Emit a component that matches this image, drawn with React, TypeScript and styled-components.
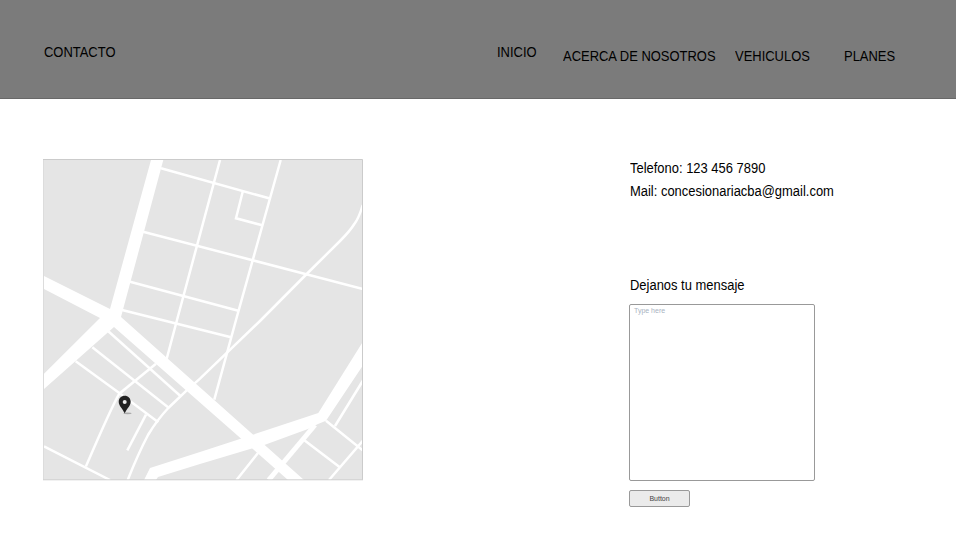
import React from "react";
import styled, { createGlobalStyle } from "styled-components";

const GlobalStyle = createGlobalStyle`
  * { box-sizing: border-box; }
  body {
    margin: 0;
    background: #fff;
    color: #000;
    font: 14px/16px "Liberation Sans", Arial, sans-serif;
    overflow: hidden;
  }
`;

const Page = styled.div`
  width: 956px;
  height: 533px;
`;

const Header = styled.header`
  display: flex;
  align-items: flex-start;
  height: 99px;
  padding: 44px 60px 0 44px;
  background: #7b7b7b;
  border-bottom: 1px solid #686868;
`;

const Condensed = styled.span`
  display: inline-block;
  transform: scaleX(0.925);
  transform-origin: left;
  white-space: nowrap;
`;

const Title = styled.h1`
  margin: 0;
  font: inherit;
`;

const Nav = styled.nav`
  display: flex;
  margin-left: auto;
`;

const NavItem = styled.a<{ $width: number; $drop?: number }>`
  width: ${(p) => p.$width}px;
  padding-top: ${(p) => p.$drop ?? 0}px;
  color: inherit;
`;

const Main = styled.main`
  display: flex;
  justify-content: space-between;
  padding: 60px 121px 0 43px;
`;

const Map = styled.svg`
  display: block;
  width: 320px;
  height: 322px;
`;

const Aside = styled.section`
  display: flex;
  flex-direction: column;
  align-items: flex-start;
  width: 206px;
  padding-top: 1px;
`;

const Line = styled.p<{ $gap: number }>`
  height: 16px;
  margin: 0 0 ${(p) => p.$gap}px 1px;
`;

const Message = styled.textarea`
  display: block;
  width: 186px;
  height: 177px;
  margin: 0 0 9px;
  padding: 1px 4px;
  border: 1px solid #999;
  border-radius: 2px;
  resize: none;
  font: 7px/9px "Liberation Sans", Arial, sans-serif;
  &::placeholder { color: #a9b3c1; opacity: 1; }
`;

const Send = styled.button`
  width: 61px;
  height: 17px;
  padding: 0 0 1px;
  border: 1px solid #999;
  border-radius: 2px;
  background: #ebebeb;
  color: #444;
  font: 7px/9px "Liberation Sans", Arial, sans-serif;
`;

function StreetMap() {
  return (
    <Map viewBox="43 159 320 322" aria-label="Mapa">
      <rect x="43.5" y="159.5" width="319" height="320.5" fill="#e5e5e5" />
      <g fill="#fff">
        <path d="M151 160H163.3L121 317L304 480H288L114 327L44 389V373.7L100 318L44 289V276L110 309Z" />
        <path d="M144 480L150 468L200 452L240.7 438.7L318.3 413L362.7 342V365.7L326 420.7L318 424L308 429L265 444.7L200 464L158 477L156 480Z" />
      </g>
      <g fill="none" stroke="#fff" strokeWidth="2.5">
        <path d="M161 168.3L269 198.3M143 231.7L363 289M130 281.7L238.3 310.7M122 310L231 337.3" />
        <path d="M220 160L177 320L166.7 358.7M280.7 160L236 320L214.3 399.7M242.7 191.7L236 218.3L262.3 225.3" />
        <path d="M362.7 205Q359 218 354.3 224Q350 231 340 241L306.7 274L261 320L200 378.7L186.7 390.3L168.3 408Q157 420 148 435Q138 454 127.7 480" />
        <path d="M108.3 331.3L180.7 396.3M92.3 347.3L169 408M75.7 361.3L119.3 393L158.3 422.3" />
        <path d="M156 363.7L119.3 393.7Q112 406 86 466.3M146 414.7L127.3 450.3M44 446.3L110 480" />
        <path d="M326 420.7L363 450.5M335 426L363 380.5M363 440.5L329 480M304 440L339.5 467M258 453L236.5 480" />
        <path d="M315 425L268.7 480" strokeWidth="5" />
      </g>
      <path d="M43.5 160V480" stroke="#dcdcdc" />
      <path d="M43 159.5H362.5V480" fill="none" stroke="#cbcbcb" />
      <path d="M43 479.8H363" stroke="#d0d0d0" />
      <ellipse cx="127.5" cy="413.3" rx="4" ry="0.9" fill="#aaa" />
      <path d="M124.7 395.7C121.3 395.7 118.7 398.3 118.7 401.7C118.7 405.7 122.5 408.5 124.7 413.3C126.9 408.5 130.7 405.7 130.7 401.7C130.7 398.3 128.1 395.7 124.7 395.7Z" fill="#222" />
      <circle cx="124.7" cy="402" r="2" fill="#eee" />
    </Map>
  );
}

export default function App() {
  return (
    <Page>
      <GlobalStyle />
      <Header>
        <Title><Condensed>CONTACTO</Condensed></Title>
        <Nav>
          <NavItem $width={66}><Condensed>INICIO</Condensed></NavItem>
          <NavItem $width={172} $drop={4}><Condensed>ACERCA DE NOSOTROS</Condensed></NavItem>
          <NavItem $width={109} $drop={4}><Condensed>VEHICULOS</Condensed></NavItem>
          <NavItem $width={52} $drop={4}><Condensed>PLANES</Condensed></NavItem>
        </Nav>
      </Header>
      <Main>
        <StreetMap />
        <Aside>
          <Line $gap={7}><Condensed>Telefono: 123 456 7890</Condensed></Line>
          <Line $gap={78}><Condensed>Mail: concesionariacba@gmail.com</Condensed></Line>
          <Line $gap={11}><Condensed>Dejanos tu mensaje</Condensed></Line>
          <Message placeholder="Type here" />
          <Send>Button</Send>
        </Aside>
      </Main>
    </Page>
  );
}
